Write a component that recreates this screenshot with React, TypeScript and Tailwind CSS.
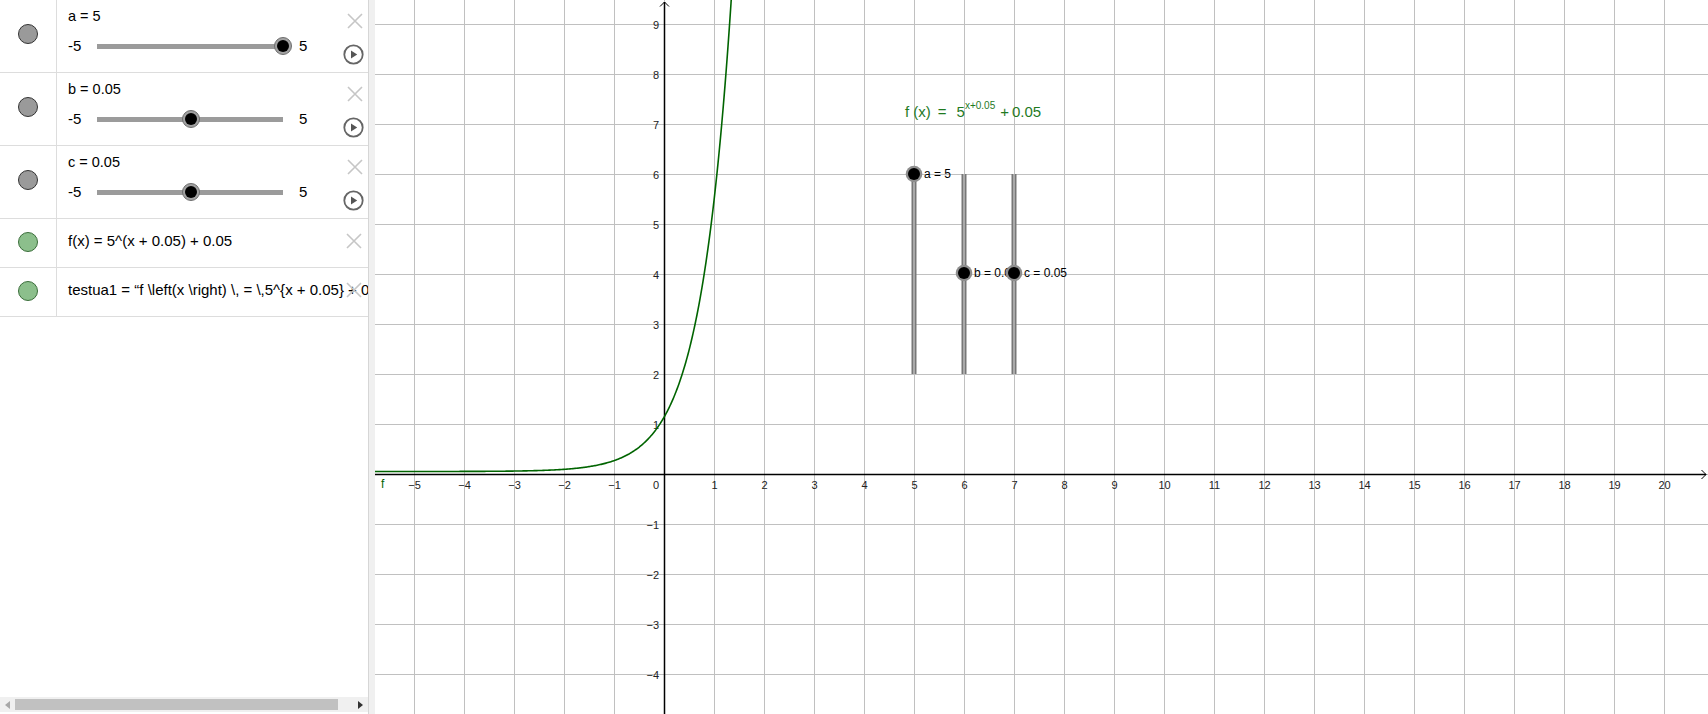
import React from 'react';

const OX = 664;
const OY = 474;
const U = 50;

const font = { fontFamily: '"Liberation Sans", Arial, sans-serif' };

function Marble({ green = false }: { green?: boolean }) {
  return (
    <div
      className={
        green
          ? 'h-[20px] w-[20px] rounded-full border border-[#3b6e3b] bg-[#8cbf8c]'
          : 'h-[20px] w-[20px] rounded-full border border-[#333] bg-[#9a9a9a]'
      }
    />
  );
}

function CloseIcon() {
  return (
    <svg width="16" height="16" viewBox="0 0 16 16">
      <path d="M1 1 L15 15 M15 1 L1 15" stroke="#c6c6c6" strokeWidth="1.6" fill="none" />
    </svg>
  );
}

function PlayIcon() {
  return (
    <svg width="21" height="21" viewBox="0 0 21 21">
      <circle cx="10.5" cy="10.5" r="9.2" stroke="#666" strokeWidth="1.8" fill="none" />
      <path d="M8 6.5 L14.2 10.5 L8 14.5 Z" fill="#555" />
    </svg>
  );
}

function SliderRow({ title, value }: { title: string; value: number }) {
  const left = ((value + 5) / 10) * 186;
  return (
    <div className="flex h-[73px] border-b border-[#dddddd]">
      <div className="flex w-[57px] justify-center border-r border-[#dddddd] pt-[24px]">
        <Marble />
      </div>
      <div className="flex-1 pl-[11px] pt-[6px]">
        <div className="h-[20px] text-[14.5px] leading-[20px] text-black">{title}</div>
        <div className="mt-[12px] flex h-[16px] items-center text-[15px] text-black">
          <span className="w-[29px]">-5</span>
          <div className="relative h-[5px] w-[186px] bg-[#9b9b9b]">
            <div
              className="absolute top-1/2 flex h-[18px] w-[18px] -translate-x-1/2 -translate-y-1/2 items-center justify-center rounded-full border border-[#6e6e6e] bg-[#a2a2a2]"
              style={{ left }}
            >
              <div className="h-[12px] w-[12px] rounded-full bg-black" />
            </div>
          </div>
          <span className="ml-[16px]">5</span>
        </div>
      </div>
      <div className="flex w-[30px] flex-col items-center pt-[13px]">
        <div className="ml-[3px]">
          <CloseIcon />
        </div>
        <div className="mt-[15px]">
          <PlayIcon />
        </div>
      </div>
    </div>
  );
}

function TextRow({ children }: { children: React.ReactNode }) {
  return (
    <div className="relative flex h-[49px] border-b border-[#dddddd]">
      <div className="flex w-[57px] justify-center border-r border-[#dddddd] pt-[13px]">
        <Marble green />
      </div>
      <div className="flex-1 overflow-hidden whitespace-nowrap pl-[11px] pt-[12px] text-[15px] leading-[20px] text-black">
        {children}
      </div>
      <div className="absolute right-[6px] top-[14px]">
        <CloseIcon />
      </div>
    </div>
  );
}

function Graph() {
  const vx: number[] = [];
  for (let k = -5; k <= 20; k++) vx.push(k);
  const hy: number[] = [];
  for (let k = -4; k <= 9; k++) hy.push(k);

  const pts: string[] = [];
  for (let x = -5.8; x <= 1.37; x += 0.02) {
    const X = OX + U * x;
    const Y = OY - U * (Math.pow(5, x + 0.05) + 0.05);
    pts.push(`${X.toFixed(2)},${Y.toFixed(2)}`);
  }

  const minus = (k: number) => (k < 0 ? '\u2212' + Math.abs(k) : String(k));
  const sy = (v: number) => OY - U * (4 + v * 0.4);

  return (
    <svg width="1333" height="714" viewBox="375 0 1333 714" className="block" style={font}>
      <rect x="375" y="0" width="1333" height="714" fill="#fff" />
      {vx.map((k) => (
        <line key={'v' + k} x1={OX + U * k + 0.5} y1="0" x2={OX + U * k + 0.5} y2="714" stroke="#c0c0c0" strokeWidth="1" />
      ))}
      {hy.map((k) => (
        <line key={'h' + k} x1="375" y1={OY - U * k + 0.5} x2="1708" y2={OY - U * k + 0.5} stroke="#c0c0c0" strokeWidth="1" />
      ))}
      <line x1="375" y1={OY + 0.5} x2="1706" y2={OY + 0.5} stroke="#000" strokeWidth="1.5" />
      <line x1={OX + 0.5} y1="714" x2={OX + 0.5} y2="2" stroke="#000" strokeWidth="1.5" />
      <path d={`M1701.5 ${OY - 4} L1706 ${OY + 0.5} L1701.5 ${OY + 5}`} stroke="#000" strokeWidth="1" fill="none" />
      <path d={`M${OX - 4} 6.5 L${OX + 0.5} 2 L${OX + 5} 6.5`} stroke="#000" strokeWidth="1" fill="none" />

      {vx
        .filter((k) => k !== 0)
        .map((k) => (
          <text key={'xl' + k} x={OX + U * k + 0.5} y={OY + 15} fontSize="11" fill="#222" textAnchor="middle">
            {minus(k)}
          </text>
        ))}
      <text x={OX - 5} y={OY + 15} fontSize="11" fill="#222" textAnchor="end">
        0
      </text>
      {hy
        .filter((k) => k !== 0)
        .map((k) => (
          <text key={'yl' + k} x={OX - 5} y={OY - U * k + 4.5} fontSize="11" fill="#222" textAnchor="end">
            {minus(k)}
          </text>
        ))}

      <polyline points={pts.join(' ')} fill="none" stroke="#006400" strokeWidth="1.6" />
      <text x="381" y="488" fontSize="12" fill="#006400">
        f
      </text>

      <text x="905" y="117" fontSize="15" fill="#1f7a1f">
        <tspan>f (x)</tspan><tspan dx="7">=</tspan><tspan dx="10">5</tspan><tspan dy="-8" fontSize="10">x+0.05</tspan><tspan dy="8" dx="5">+</tspan><tspan dx="3">0.05</tspan>
      </text>

      {[5, 6, 7].map((k) => (
        <g key={'s' + k}>
          <line x1={OX + U * k} y1={OY - U * 2} x2={OX + U * k} y2={OY - U * 6} stroke="#777" strokeWidth="5" />
          <line x1={OX + U * k} y1={OY - U * 2} x2={OX + U * k} y2={OY - U * 6} stroke="#a9a9a9" strokeWidth="2" />
        </g>
      ))}

      <circle cx={OX + U * 5} cy={sy(5)} r="8.3" fill="#8e8e8e" />
      <circle cx={OX + U * 5} cy={sy(5)} r="6" fill="#000" />
      <text x={OX + U * 5 + 10} y={sy(5) + 4} fontSize="12" fill="#000">
        a = 5
      </text>

      <circle cx={OX + U * 6} cy={sy(0.05)} r="8.3" fill="#8e8e8e" />
      <circle cx={OX + U * 6} cy={sy(0.05)} r="6" fill="#000" />
      <text x={OX + U * 6 + 10} y={sy(0.05) + 4} fontSize="12" fill="#000">
        b = 0.05
      </text>

      <circle cx={OX + U * 7} cy={sy(0.05)} r="8.3" fill="#8e8e8e" />
      <circle cx={OX + U * 7} cy={sy(0.05)} r="6" fill="#000" />
      <text x={OX + U * 7 + 10} y={sy(0.05) + 4} fontSize="12" fill="#000">
        c = 0.05
      </text>
    </svg>
  );
}

export default function App() {
  return (
    <div className="flex h-[714px] w-[1708px] overflow-hidden bg-white" style={font}>
      <div className="flex h-full w-[368px] flex-col bg-white">
        <SliderRow title="a = 5" value={5} />
        <SliderRow title="b = 0.05" value={0.05} />
        <SliderRow title="c = 0.05" value={0.05} />
        <TextRow>f(x) = 5^(x + 0.05) + 0.05</TextRow>
        <TextRow>{'testua1 = \u201cf \\left(x \\right) \\, = \\,5^{x + 0.05} + 0.05\u201d'}</TextRow>
        <div className="flex-1" />
        <div className="mb-[2px] flex h-[15px] items-center bg-[#f0f0f0]">
          <div className="flex w-[15px] justify-center">
            <div className="h-0 w-0 border-y-[4px] border-r-[5px] border-y-transparent border-r-[#a8a8a8]" />
          </div>
          <div className="h-[11px] w-[323px] bg-[#c1c1c1]" />
          <div className="flex flex-1 justify-end pr-[5px]">
            <div className="h-0 w-0 border-y-[4px] border-l-[5px] border-y-transparent border-l-[#333]" />
          </div>
        </div>
      </div>
      <div className="h-full w-[7px] border-l border-[#d6d6d6] bg-[#f0f0f0]" />
      <div className="flex-1">
        <Graph />
      </div>
    </div>
  );
}
